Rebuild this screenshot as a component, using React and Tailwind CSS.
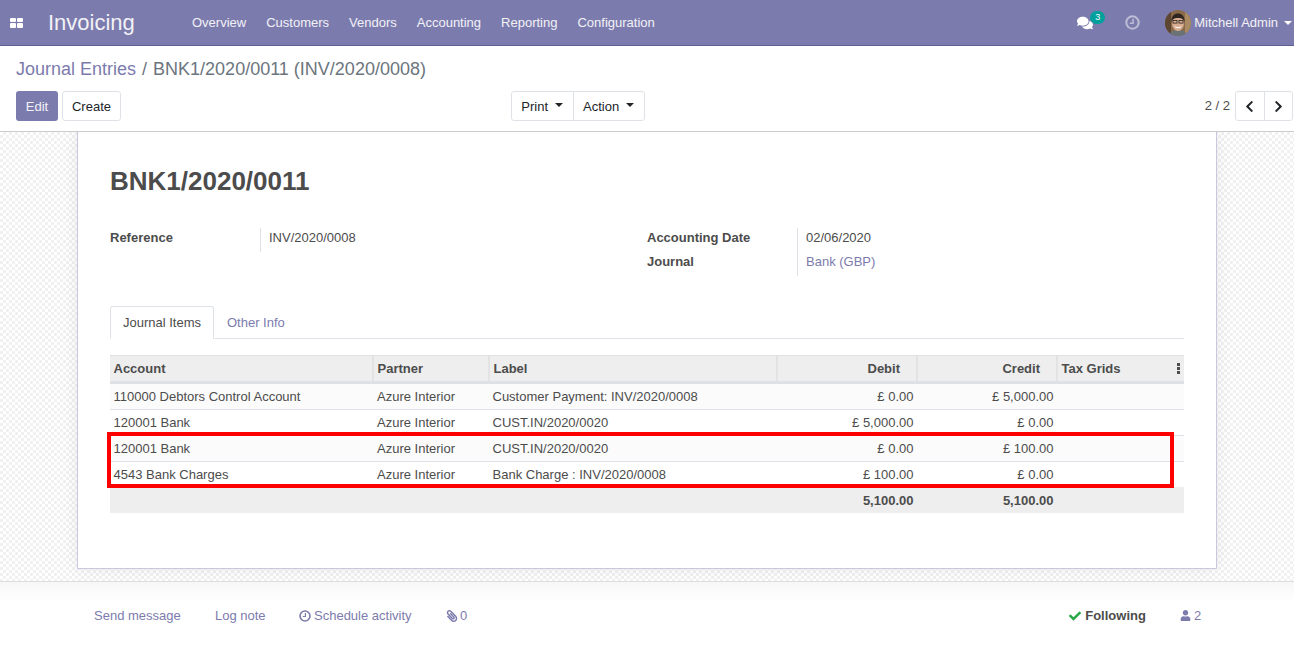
import { FaComments, FaChevronLeft, FaChevronRight, FaCheck, FaUser, FaPaperclip } from "react-icons/fa";

const menus = ["Overview", "Customers", "Vendors", "Accounting", "Reporting", "Configuration"];

const rows = [
    { account: "110000 Debtors Control Account", label: "Customer Payment: INV/2020/0008", debit: "£ 0.00", credit: "£ 5,000.00", odd: true },
    { account: "120001 Bank", label: "CUST.IN/2020/0020", debit: "£ 5,000.00", credit: "£ 0.00" },
    { account: "120001 Bank", label: "CUST.IN/2020/0020", debit: "£ 0.00", credit: "£ 100.00", odd: true },
    { account: "4543 Bank Charges", label: "Bank Charge : INV/2020/0008", debit: "£ 100.00", credit: "£ 0.00" },
];

const cols = "grid grid-cols-[264px_116px_288px_140px_140px_126px]";

function Caret({ className }) {
    return <span className={`inline-block w-0 h-0 border-x-[4px] border-x-transparent border-t-[4px] ${className}`} />;
}

function ClockIcon({ size, className }) {
    return (
        <svg width={size} height={size} viewBox="0 0 14 14" fill="none" stroke="currentColor" className={className}>
            <circle cx="7" cy="7" r="5.8" strokeWidth="1.9" />
            <path d="M7.5 3.5V7.6H4.5" strokeWidth="1.4" />
        </svg>
    );
}

function Avatar() {
    return (
        <svg width="26" height="26" viewBox="0 0 26 26" className="rounded-full">
            <rect width="26" height="26" fill="#8a6a48" />
            <rect x="0" y="0" width="6" height="26" fill="#5c4632" />
            <rect x="20" y="0" width="6" height="26" fill="#a98a62" />
            <path d="M4 26c1-5 4-6 9-6s8 1 9 6z" fill="#6b7276" />
            <ellipse cx="13" cy="13.5" rx="6" ry="7.5" fill="#d8ac90" />
            <path d="M6.5 12c-.5-6 3-8.500 6.500-8.500s7 2.500 6.500 8.500c-1-3-2.500-4-6.500-4s-5.500 1-6.500 4z" fill="#2f2620" />
            <rect x="8" y="10.500" width="4" height="2.600" fill="none" stroke="#2b2420" strokeWidth="0.8" />
            <rect x="14" y="10.500" width="4" height="2.600" fill="none" stroke="#2b2420" strokeWidth="0.8" />
            <path d="M9.500 16c2 1.500 5 1.500 7 0-1 3-6 3-7 0z" fill="#fff" />
        </svg>
    );
}

function Navbar() {
    return (
        <nav className="h-[46px] shrink-0 bg-[#7c7bad] border-b border-[#5f5e97] flex items-center text-white text-[13px]">
            <div className="w-[48px] pl-[10px]">
                <div className="grid grid-cols-[6px_6px] grid-rows-[4.5px_4.5px] gap-[1px] w-[13px]">
                    <span className="bg-white rounded-[1px]" />
                    <span className="bg-white rounded-[1px]" />
                    <span className="bg-white rounded-[1px]" />
                    <span className="bg-white rounded-[1px]" />
                </div>
            </div>
            <span className="text-[22px] w-[144px] opacity-90">Invoicing</span>
            <div className="flex gap-[20px] text-white/90">
                {menus.map((m) => (
                    <span key={m}>{m}</span>
                ))}
            </div>
            <div className="ml-auto flex items-center">
                <div className="relative">
                    <FaComments className="text-[16px] text-white" />
                    <span className="absolute -top-[4px] left-[13px] w-[15px] h-[13px] rounded-full bg-[#00a09d] text-[9px] leading-[13px] text-center">3</span>
                </div>
                <ClockIcon size={15} className="text-white/50 ml-[32px] mr-[25px]" />
                <Avatar />
                <span className="ml-[3px] text-white/90">Mitchell Admin</span>
                <Caret className="border-t-white ml-[6px] mr-[2px]" />
            </div>
        </nav>
    );
}

function ControlPanel() {
    return (
        <div className="h-[86px] shrink-0 border-b border-[#cccccc] px-[16px] pt-[12px] bg-white">
            <div className="text-[18px] leading-[22px] text-[#6c757d]">
                <span className="text-[#7c7bad]">Journal Entries</span>
                <span className="mx-[6px]">/</span>
                <span>BNK1/2020/0011 (INV/2020/0008)</span>
            </div>
            <div className="mt-[11px] grid grid-cols-3 items-center text-[13px]">
                <div className="flex gap-[4px]">
                    <button className="h-[30px] w-[42px] pt-[1px] rounded-[3px] bg-[#7c7bad] text-white/90">Edit</button>
                    <button className="h-[30px] w-[59px] pt-[1px] rounded-[3px] border border-[#dee2e6] text-[#212529]">Create</button>
                </div>
                <div className="flex h-[30px] w-[134px] ml-[74px] rounded-[3px] border border-[#dee2e6] text-[#212529]">
                    <button className="w-[62px] pt-[1px] border-r border-[#dee2e6] flex items-center justify-center gap-[7px]">
                        Print <Caret className="border-t-[#212529] -mt-[3px]" />
                    </button>
                    <button className="flex-1 pt-[1px] flex items-center justify-center gap-[7px]">
                        Action <Caret className="border-t-[#212529] -mt-[3px]" />
                    </button>
                </div>
                <div className="flex items-center justify-end -mr-[15px] text-[#4c4c4c]">
                    <span className="mr-[5px]">2 / 2</span>
                    <div className="flex h-[30px] w-[58px] rounded-[3px] border border-[#dee2e6] text-[#212529]">
                        <button className="w-[29px] border-r border-[#dee2e6] flex items-center justify-center">
                            <FaChevronLeft className="text-[13px]" />
                        </button>
                        <button className="flex-1 flex items-center justify-center">
                            <FaChevronRight className="text-[13px]" />
                        </button>
                    </div>
                </div>
            </div>
        </div>
    );
}

function HeadCell({ children, right }) {
    return (
        <div className={`px-[3.5px] flex items-center border-r-2 border-[#e3e3e3] ${right ? "justify-end pr-[16px]" : ""}`}>
            {children}
        </div>
    );
}

function JournalTable() {
    return (
        <div className="relative mt-[16px] text-[13px] text-[#4c4c4c]">
            <div className={`${cols} h-[29px] bg-[#eeeeee] border-t border-[#e0e0e0] border-b-[3px] border-b-[#dee2e6] font-bold`}>
                <HeadCell>Account</HeadCell>
                <HeadCell>Partner</HeadCell>
                <HeadCell>Label</HeadCell>
                <HeadCell right>Debit</HeadCell>
                <HeadCell right>Credit</HeadCell>
                <div className="px-[3.5px] flex items-center justify-between">
                    Tax Grids
                    <span className="flex flex-col gap-[1px] mr-[1px]">
                        <i className="w-[3px] h-[3px] bg-[#4c4c4c]" />
                        <i className="w-[3px] h-[3px] bg-[#4c4c4c]" />
                        <i className="w-[3px] h-[3px] bg-[#4c4c4c]" />
                    </span>
                </div>
            </div>
            {rows.map((r, i) => (
                <div key={i} className={`${cols} h-[26px] items-center border-b border-[#dee2e6] ${r.odd ? "bg-[#fbfbfb]" : "bg-white"}`}>
                    <div className="pl-[3.5px]">{r.account}</div>
                    <div className="px-[3px]">Azure Interior</div>
                    <div className="px-[2.5px]">{r.label}</div>
                    <div className="px-[4.5px] text-right">{r.debit}</div>
                    <div className="px-[4.5px] text-right">{r.credit}</div>
                    <div />
                </div>
            ))}
            <div className={`${cols} h-[26px] pt-[1px] items-center bg-[#eeeeee] font-bold -mt-px`}>
                <div />
                <div />
                <div />
                <div className="px-[4.5px] text-right">5,100.00</div>
                <div className="px-[4.5px] text-right">5,100.00</div>
                <div />
            </div>
            <div className="absolute left-[-3px] top-[77px] w-[1067px] h-[56px] border-[4px] border-[#ff0000]" />
        </div>
    );
}

function Sheet() {
    return (
        <div className="mx-[77px] h-[437px] shrink-0 bg-white border-x border-b border-[#c9c8dc] px-[32px] pt-[32px] shadow-[0_0_16px_rgba(0,0,0,0.08)]">
            <h1 className="text-[26px] leading-[34px] font-bold text-[#4c4c4c]">BNK1/2020/0011</h1>
            <div className="mt-[30px] flex text-[13px] leading-[20px] text-[#4c4c4c]">
                <div className="flex w-[537px] h-[24px]">
                    <span className="w-[150px] font-bold">Reference</span>
                    <span className="border-l border-[#dee2e6] pl-[8px]">INV/2020/0008</span>
                </div>
                <div className="flex">
                    <div className="w-[150px] font-bold">
                        <div className="h-[24px]">Accounting Date</div>
                        <div>Journal</div>
                    </div>
                    <div className="border-l border-[#dee2e6] pl-[8px] h-[48px]">
                        <div className="h-[24px]">02/06/2020</div>
                        <div className="text-[#7c7bad]">Bank (GBP)</div>
                    </div>
                </div>
            </div>
            <div className="mt-[30px] flex h-[33px] border-b border-[#dee2e6] text-[13px]">
                <div className="h-[33px] w-[104px] border border-[#dee2e6] border-b-white rounded-t-[3px] bg-white flex items-center justify-center text-[#4c4c4c]">
                    Journal Items
                </div>
                <div className="px-[13px] pt-[1px] flex items-center text-[#7c7bad]">Other Info</div>
            </div>
            <JournalTable />
        </div>
    );
}

function Chatter() {
    return (
        <div className="flex-1 border-t border-[#dddddd] bg-gradient-to-b from-[#f7f7f7] to-white to-[20px] flex items-start pt-[24px] pl-[94px] text-[13px] text-[#7c7bad]">
            <span className="w-[121px]">Send message</span>
            <span className="w-[84px]">Log note</span>
            <span className="w-[147px] flex items-center gap-[3px]">
                <ClockIcon size={12} /> Schedule activity
            </span>
            <span className="flex items-center gap-[2px]">
                <FaPaperclip className="text-[12px] -scale-x-100" /> 0
            </span>
            <span className="ml-[602px] flex items-center gap-[4px] font-bold text-[#4c4c4c]">
                <FaCheck className="text-[12px] text-[#28a745]" /> Following
            </span>
            <span className="ml-[34px] flex items-center gap-[3px]">
                <FaUser className="text-[11px]" /> 2
            </span>
        </div>
    );
}

export default function App() {
    return (
        <div className="h-[669px] flex flex-col overflow-hidden bg-white font-['Liberation_Sans',Arial,sans-serif]">
            <Navbar />
            <ControlPanel />
            <div className="h-[449px] shrink-0 overflow-hidden bg-[repeating-conic-gradient(#f1f1f1_0_25%,#ffffff_0_50%)] bg-[length:6px_6px]">
                <Sheet />
            </div>
            <Chatter />
        </div>
    );
}
